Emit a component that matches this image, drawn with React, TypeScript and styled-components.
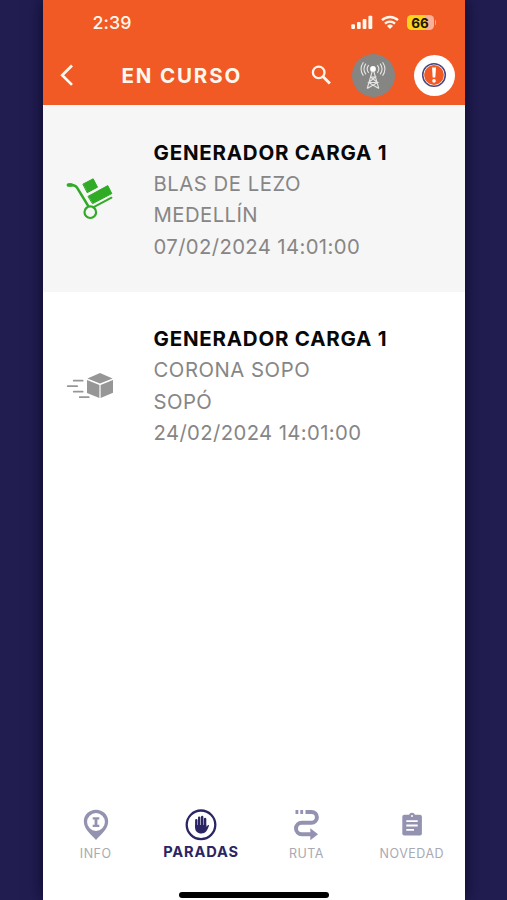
import React from "react";
import styled, { createGlobalStyle } from "styled-components";

const GlobalStyle = createGlobalStyle`
  *, *::before, *::after { box-sizing: border-box; }
  body { margin: 0; background: #211d51; font-family: Inter, "Liberation Sans", sans-serif; }
  svg { display: block; flex: none; }
`;

const Stage = styled.div`
  display: flex;
  width: 507px;
  height: 900px;
  padding: 0 43px;
  overflow: hidden;
  background: #211d51;
`;

const Phone = styled.main`
  display: flex;
  flex-direction: column;
  width: 421.5px;
  flex: none;
  height: 900px;
  background: #fff;
  box-shadow: 0 0 16px rgba(5, 3, 30, 0.75);
`;

const Header = styled.header`
  height: 105.4px;
  flex: none;
  background: #f15a24;
  color: #fff7ee;
`;

const StatusBar = styled.div`
  display: flex;
  align-items: center;
  height: 45px;
  padding: 0 28.5px 0 49.5px;
`;

const StatusIcons = styled.div`
  display: flex;
  align-items: center;
  gap: 8px;
`;

const Clock = styled.time`
  margin-right: auto;
  font-size: 17.8px;
  font-weight: 500;
  letter-spacing: 0.1px;
  line-height: 22px;
`;

const Battery = styled.span`
  width: 27px;
  height: 15.5px;
  border-radius: 4.5px;
  background: linear-gradient(90deg, #fdd31d 66%, #fbb09a 66%);
  color: #1d1600;
  font-size: 13.5px;
  font-weight: 700;
  line-height: 16px;
  text-align: center;
`;

const BatteryTip = styled.i`
  width: 1.5px;
  height: 5px;
  margin-left: 1px;
  border-radius: 0 2px 2px 0;
  background: #fba78c;
`;

const TitleBar = styled.div`
  display: flex;
  align-items: center;
  height: 60px;
  padding: 0 10px 0 14px;
`;

const Title = styled.h1`
  margin: 0 auto 0 44.5px;
  padding-top: 1px;
  font-size: 20.5px;
  font-weight: 700;
  letter-spacing: 1.85px;
  line-height: 24px;
`;

const RoundButton = styled.button<{ $fill: string; $size: number }>`
  display: grid;
  place-items: center;
  width: ${(p) => p.$size}px;
  height: ${(p) => p.$size}px;
  margin: 0 0 0 19px;
  padding: 0;
  border: 0;
  border-radius: 50%;
  background: ${(p) => p.$fill};
`;

const Stop = styled.article<{ $shaded?: boolean }>`
  display: flex;
  align-items: center;
  height: 186.2px;
  padding-left: 17px;
  background: ${(p) => (p.$shaded ? "#f6f6f6" : "#fff")};
`;

const StopText = styled.div`
  margin-left: 33.5px;
  padding-top: 2px;
  white-space: nowrap;
`;

const StopName = styled.h2`
  margin: 0;
  color: #080808;
  font-size: 20.5px;
  font-weight: 700;
  letter-spacing: 0.77px;
  line-height: 31.3px;
`;

const StopLine = styled.p<{ $spacing: number }>`
  margin: 0;
  color: #868686;
  font-size: 20.3px;
  letter-spacing: ${(p) => p.$spacing}px;
  line-height: 31.3px;
`;

const Tabs = styled.nav`
  display: grid;
  grid-template-columns: repeat(4, 1fr);
  height: 75px;
  margin-top: auto;
`;

const Tab = styled.a<{ $active?: boolean }>`
  display: flex;
  flex-direction: column;
  align-items: center;
  color: ${(p) => (p.$active ? "#2b2563" : "#9492b1")};
`;

const TabLabel = styled.span<{ $active?: boolean }>`
  margin-top: ${(p) => (p.$active ? 2 : 4)}px;
  color: ${(p) => (p.$active ? "#2b2563" : "#a9a9b2")};
  font-size: ${(p) => (p.$active ? 14.6 : 12.5)}px;
  font-weight: ${(p) => (p.$active ? 700 : 400)};
  letter-spacing: ${(p) => (p.$active ? 0.85 : 0.5)}px;
  line-height: 18px;
`;

const HomeArea = styled.div`
  display: flex;
  justify-content: center;
  height: 16px;
  padding-top: 8px;
`;

const HomeBar = styled.div`
  width: 150px;
  height: 6px;
  border-radius: 3px;
  background: #000;
`;

const SignalIcon = () => (
  <svg width="22" height="15" viewBox="0 0 22 15" fill="currentColor">
    <rect x="0.3" y="9.3" width="3.7" height="4.7" rx="1" />
    <rect x="6" y="7" width="3.7" height="7" rx="1" />
    <rect x="11.7" y="4" width="3.7" height="10" rx="1" />
    <rect x="17.4" y="0.7" width="3.9" height="13.3" rx="1" />
  </svg>
);

const WifiIcon = () => (
  <svg width="18" height="15" viewBox="0 0 18 15" fill="none" stroke="currentColor" strokeWidth="2.4">
    <path d="M1 5.2a11.6 11.6 0 0 1 16 0" />
    <path d="M4 8.6a7.3 7.3 0 0 1 10 0" />
    <path d="M9 14 6 10.9a4.3 4.3 0 0 1 6 0Z" fill="currentColor" stroke="none" />
  </svg>
);

const BackIcon = () => (
  <svg width="20" height="24" viewBox="0 0 20 24" fill="none" stroke="currentColor" strokeWidth="2.7">
    <path d="M15 2.5 5.2 12.2l9.8 9.7" />
  </svg>
);

const SearchIcon = () => (
  <svg width="24" height="24" viewBox="0 0 24 24" fill="none" stroke="currentColor">
    <circle cx="9.7" cy="9.4" r="5.8" strokeWidth="2.3" />
    <path d="m14.1 13.8 6.8 6.8" strokeWidth="2.8" />
  </svg>
);

const AntennaIcon = () => (
  <svg width="26" height="30" viewBox="0 0 26 30" fill="none" stroke="#e4e4e4" strokeWidth="1.1">
    <circle cx="13" cy="9" r="2.9" fill="#fff" stroke="none" />
    <path d="M12.3 11 7.2 28.5M13.7 11l5.1 17.5M10.6 17h4.8l-6.7 5.5h8.8L7.2 28.5M10.6 17l6.9 5.5M8.7 22.5l10.1 6" />
    <path d="M8.7 5.2a6 6 0 0 0 0 7.6M5.9 3.7a8.9 8.9 0 0 0 0 10.6M3.4 2.2a12 12 0 0 0 0 13.6M17.3 5.2a6 6 0 0 1 0 7.6M20.1 3.7a8.9 8.9 0 0 1 0 10.6M22.6 2.2a12 12 0 0 1 0 13.6" />
  </svg>
);

const AlertIcon = () => (
  <svg width="26" height="26" viewBox="0 0 26 26">
    <circle cx="13" cy="13" r="11.3" fill="#fff" stroke="#494681" strokeWidth="1.5" />
    <circle cx="13" cy="13" r="9.9" fill="#f15a24" />
    <path d="M11 5.5h4l-.7 10h-2.6Z" fill="#fff" />
    <circle cx="13" cy="18.9" r="1.8" fill="#fff" />
  </svg>
);

const TrolleyIcon = () => (
  <svg width="60" height="56" viewBox="0 0.3 60 56" fill="none" stroke="#2fab25" strokeLinecap="round" strokeLinejoin="round">
    <path d="M8.4 15.3c4-.4 7 .2 8.8 2.9L28 36" strokeWidth="2.6" />
    <path d="M8.3 15.3h3" strokeWidth="3.4" />
    <path d="m33.2 37.6 18.3-9.6" strokeWidth="1.9" />
    <circle cx="30.3" cy="42.5" r="5.8" strokeWidth="2.2" />
    <g fill="#2fab25" strokeWidth="1">
      <path d="m23.2 14.3 10-5.2 4.3 8.4-10 5.3Z" />
      <path d="m28.3 26.5 19.5-10.6 4 8-19 9.9Z" />
    </g>
  </svg>
);

const PackageIcon = () => (
  <svg width="60" height="56" viewBox="0 0.3 60 56" fill="#969696">
    <path d="m40 16.4 12.6 5.3L40 26.8l-12.6-5.1Z" />
    <path d="m27 23.2 12.4 5v13.2L27 36.2Z" />
    <path d="m53 23.2-12.4 5v13.2L53 36Z" />
    <path d="M13.7 24h9M7.7 29.5h9.5M13.7 35h9M19.7 40.5h9" stroke="#969696" strokeWidth="1.7" strokeLinecap="round" />
  </svg>
);

const InfoIcon = () => (
  <svg width="32" height="32" viewBox="0 0 32 32" fill="currentColor">
    <path fillRule="evenodd" d="M16 .8C9.2.8 3.8 5.8 3.8 12.6 3.8 20.5 11.6 26 16 31c4.4-5 12.2-10.5 12.2-18.4C28.2 5.8 22.8.8 16 .8Zm0 3.3a8.9 8.9 0 1 1 0 17.8 8.9 8.9 0 0 1 0-17.8Z" />
    <path d="M12.7 8.3h6.6v2.2h-1.9v5.2h1.9v2.2h-6.6v-2.2h1.900v-5.200h-1.900Z" />
  </svg>
);

const HandIcon = () => (
  <svg width="32" height="32" viewBox="0 0 32 32" fill="none" stroke="currentColor" strokeLinecap="round">
    <circle cx="16" cy="15.8" r="14.3" strokeWidth="2.3" />
    <path d="M11.3 11.2V18M14.2 8.6V18M17.2 8V18M20.1 10V18" strokeWidth="2.4" />
    <path d="M10.1 16h11.2v2l1.3-1.6c.8-.8 1.7-.3 1.3.7-1.6 4.4-3.3 7.5-7.4 7.5-4.2 0-6.4-2.4-6.4-6Z" fill="currentColor" stroke="none" />
  </svg>
);

const RouteIcon = () => (
  <svg width="32" height="32" viewBox="0 0 32 32" fill="none" stroke="currentColor" strokeWidth="4">
    <path d="M15.5 2.9h6a5.400 5.400 0 0 1 0 10.800H11.800a5.800 5.800 0 0 0 0 11.600H21" />
    <path d="M5.5 2.900h2.800M10.300 2.900h2.800" />
    <path d="m20.300 19.300 7.700 6-7.700 6Z" fill="currentColor" stroke="none" />
  </svg>
);

const ClipboardIcon = () => (
  <svg width="32" height="32" viewBox="0 0 32 32" fill="none">
    <rect x="6.3" y="5.8" width="19.6" height="20.8" rx="2" fill="currentColor" />
    <circle cx="16" cy="6.7" r="2.9" fill="currentColor" />
    <circle cx="16" cy="6.9" r="1" fill="#fff" />
    <path d="M10.3 12.2h11.4M10.3 16.5h11.4M10.3 20.8h7.7" stroke="#fff" strokeWidth="1.8" />
  </svg>
);

const stops = [
  { name: "GENERADOR CARGA 1", place: "BLAS DE LEZO", city: "MEDELLÍN", date: "07/02/2024 14:01:00", Icon: TrolleyIcon, shaded: true },
  { name: "GENERADOR CARGA 1", place: "CORONA SOPO", city: "SOPÓ", date: "24/02/2024 14:01:00", Icon: PackageIcon, shaded: false },
];

const tabs = [
  { label: "INFO", Icon: InfoIcon },
  { label: "PARADAS", Icon: HandIcon, active: true },
  { label: "RUTA", Icon: RouteIcon },
  { label: "NOVEDAD", Icon: ClipboardIcon },
];

export default function App() {
  return (
    <>
      <GlobalStyle />
      <Stage>
        <Phone>
          <Header>
            <StatusBar>
              <Clock>2:39</Clock>
              <StatusIcons>
                <SignalIcon />
                <WifiIcon />
                <Battery>66</Battery>
              </StatusIcons>
              <BatteryTip />
            </StatusBar>
            <TitleBar>
              <BackIcon />
              <Title>EN CURSO</Title>
              <SearchIcon />
              <RoundButton $fill="#858583" $size={43} aria-label="Señal">
                <AntennaIcon />
              </RoundButton>
              <RoundButton $fill="#fff" $size={41} aria-label="Alerta">
                <AlertIcon />
              </RoundButton>
            </TitleBar>
          </Header>
          {stops.map(({ name, place, city, date, Icon, shaded }) => (
            <Stop key={date} $shaded={shaded}>
              <Icon />
              <StopText>
                <StopName>{name}</StopName>
                <StopLine $spacing={0.53}>{place}</StopLine>
                <StopLine $spacing={0.45}>{city}</StopLine>
                <StopLine $spacing={0.38}>{date}</StopLine>
              </StopText>
            </Stop>
          ))}
          <Tabs>
            {tabs.map(({ label, Icon, active }) => (
              <Tab key={label} $active={active}>
                <Icon />
                <TabLabel $active={active}>{label}</TabLabel>
              </Tab>
            ))}
          </Tabs>
          <HomeArea>
            <HomeBar />
          </HomeArea>
        </Phone>
      </Stage>
    </>
  );
}
